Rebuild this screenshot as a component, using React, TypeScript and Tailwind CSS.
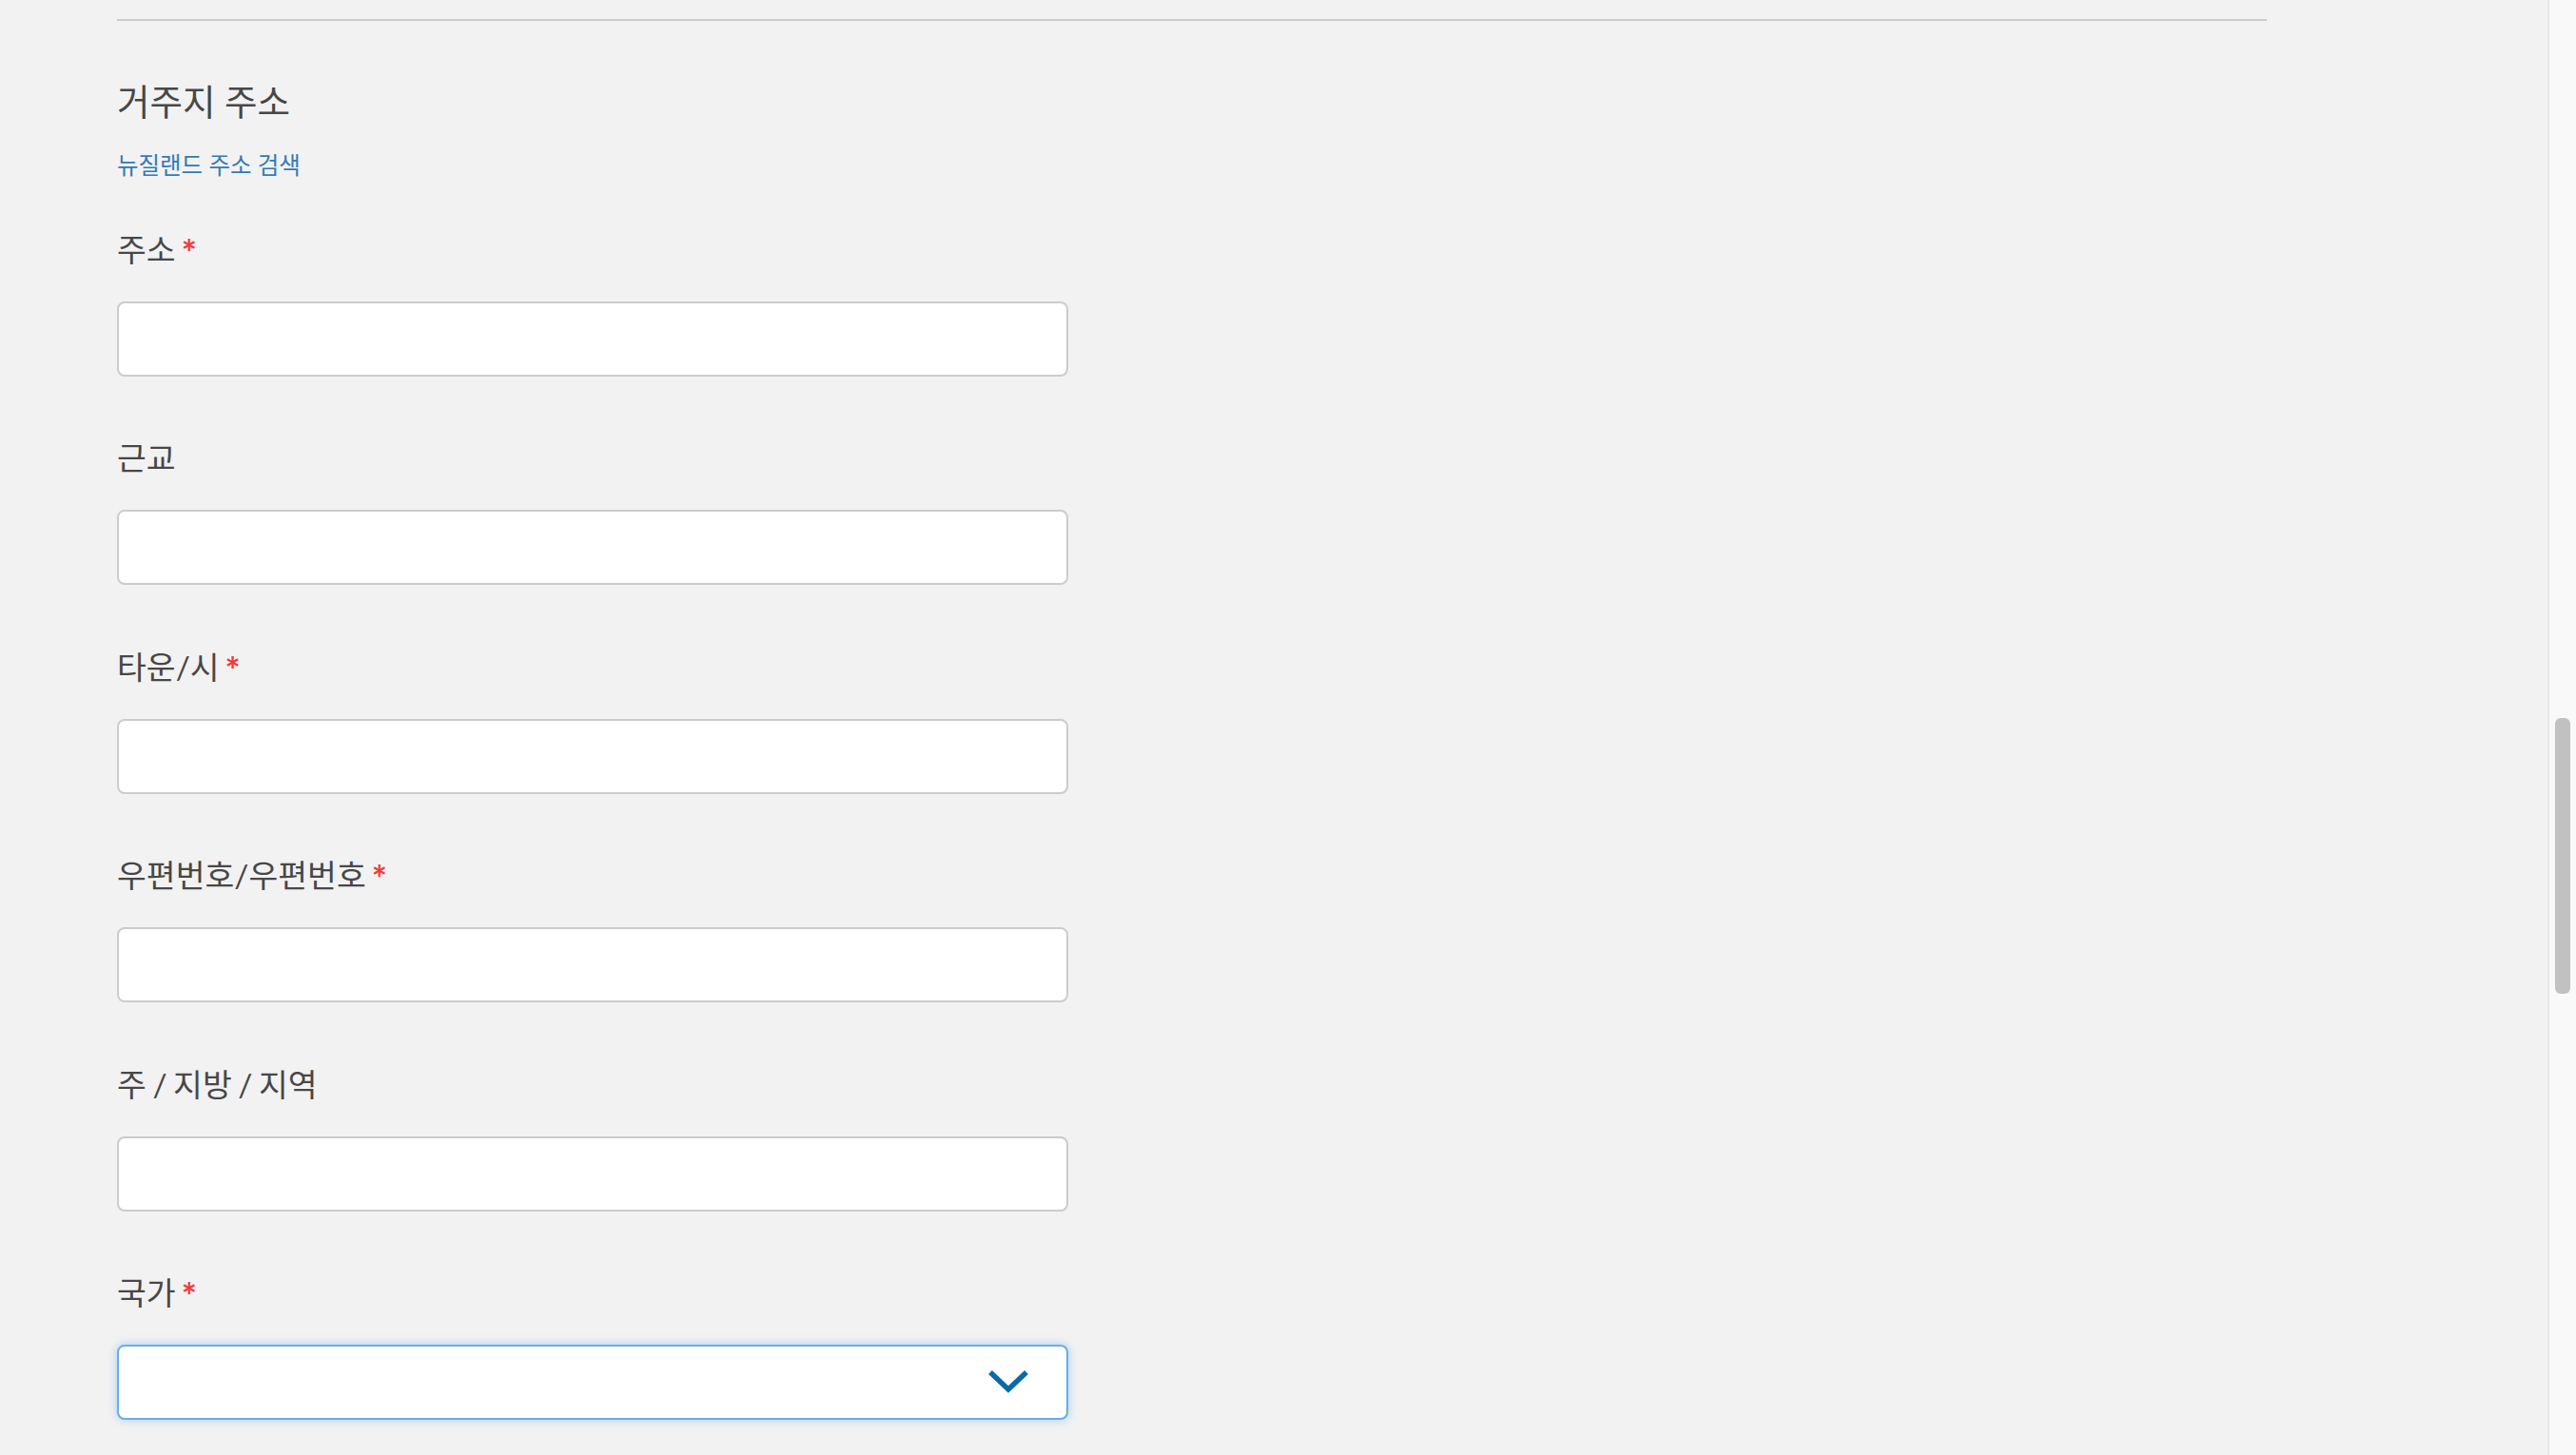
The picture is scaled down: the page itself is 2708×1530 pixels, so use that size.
import React from 'react';

const font = { fontFamily: '"Lato", "Noto Sans CJK KR", sans-serif' };

interface Field {
  label: string;
  required?: boolean;
  select?: boolean;
}

const fields: Field[] = [
  { label: '주소', required: true },
  { label: '근교' },
  { label: '타운/시', required: true },
  { label: '우편번호/우편번호', required: true },
  { label: '주 / 지방 / 지역' },
  { label: '국가', required: true, select: true },
];

function ChevronDown() {
  return (
    <svg width="44" height="26" viewBox="0 0 44 26" fill="none">
      <path d="M3 3 L22 21 L41 3" stroke="#0a6aa8" strokeWidth={5.5} strokeLinejoin="miter" />
    </svg>
  );
}

function FormField({ label, required, select }: Field) {
  return (
    <div className="mb-[65.4px]">
      {/* Label */}
      <div className="h-[40px] text-[33.5px] leading-[40px] text-[#474747] mb-[35px] whitespace-nowrap [word-spacing:-2px]">
        {label}
        {required && (
          <span className="ml-[6px] text-[38px] leading-none font-bold align-[-5px] text-[#f23b3b]">*</span>
        )}
      </div>
      {select ? (
        <div className="w-[1000px] h-[79px] bg-white border-2 border-[#66afe9] rounded-[8px] shadow-[0_0_10px_rgba(102,175,233,0.55)] flex items-center justify-end pr-[39px]">
          <ChevronDown />
        </div>
      ) : (
        <div className="w-[1000px] h-[79px] bg-white border-2 border-[#cccccc] rounded-[8px]" />
      )}
    </div>
  );
}

export default function App() {
  return (
    <div className="flex w-full h-[1530px] overflow-hidden bg-[#f2f2f2]" style={font}>
      {/* Main content */}
      <div className="flex-1 pl-[123px] pt-[20px]">
        <div className="w-[2260px] h-[2px] bg-[#cccccc]" />

        <h2 className="mt-[63px] text-[37.5px] leading-[44px] text-[#474747] font-normal">
          거주지 주소
        </h2>
        <a className="block mt-[30px] text-[24.5px] leading-[30px] text-[#337ab7] w-fit cursor-pointer">
          뉴질랜드 주소 검색
        </a>

        <div className="mt-[53px]">
          {fields.map((f) => (
            <FormField key={f.label} {...f} />
          ))}
        </div>
      </div>

      {/* Scrollbar */}
      <div className="w-[30px] h-full border-l-2 border-[#e8e8e8] bg-[#f9f9f9] px-[6px]">
        <div className="mt-[755px] h-[290px] rounded-[6px] bg-[#c1c1c1]" />
      </div>
    </div>
  );
}
